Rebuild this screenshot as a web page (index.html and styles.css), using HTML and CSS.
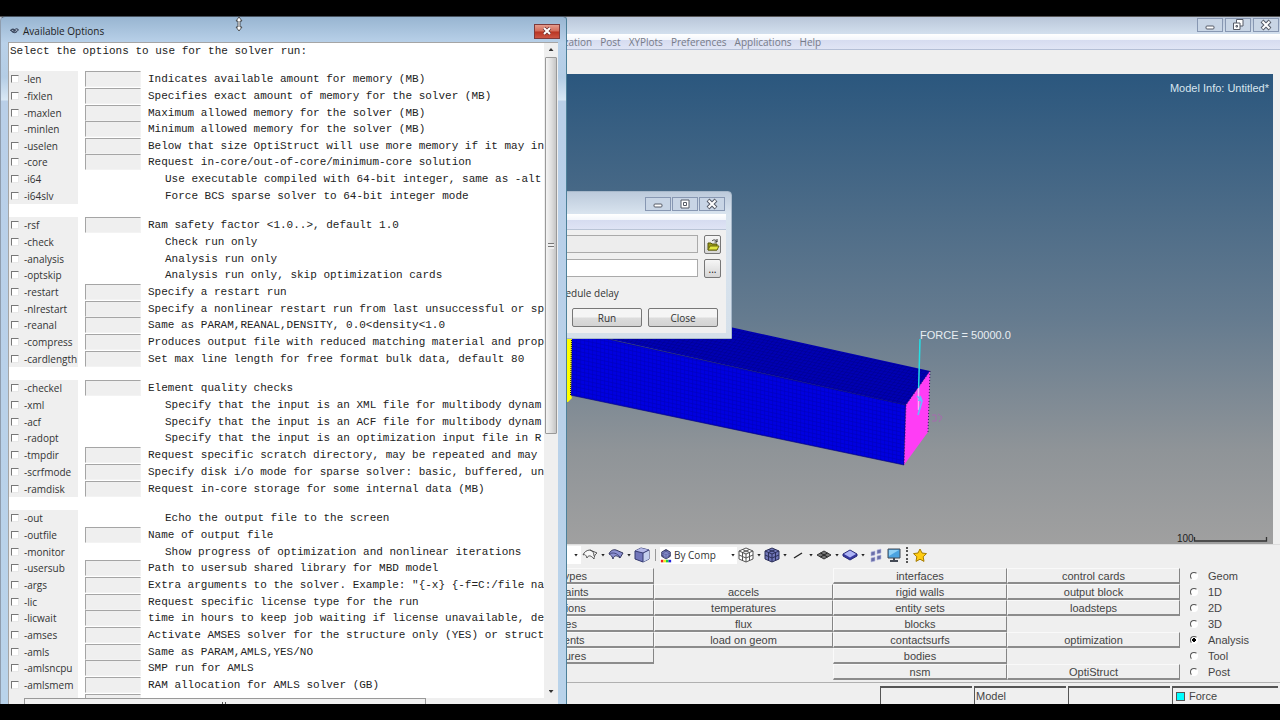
FILE: index.html
```html
<!DOCTYPE html>
<html lang="en">
<head>
<meta charset="utf-8">
<title>Available Options</title>
<link rel="stylesheet" href="styles.css">
</head>
<body>
<div class="screen">
<main class="app">
  <header class="app-title">
    <button class="win-btn" aria-label="Minimize"><svg viewBox="0 0 12 12"><rect x="2" y="7" width="8" height="3" rx="1" fill="#fff" stroke="#555a66"/></svg></button>
    <button class="win-btn" aria-label="Restore"><svg viewBox="0 0 12 12"><path d="M4.500.500h6.500v6.500h-6.500z" fill="#fff" stroke="#555a66"/><path d="M1.500 4h6.500v6.500h-6.500z" fill="#fff" stroke="#555a66"/><path d="M4 6.500h1.500v1.500H4z" fill="#fff" stroke="#555a66"/></svg></button>
    <button class="win-btn" aria-label="Close"><svg viewBox="0 0 12 12"><path d="M2 2l8 8M10 2l-8 8" stroke="#555a66" stroke-width="4"/><path d="M2.500 2.500l7 7M9.500 2.500l-7 7" stroke="#fff" stroke-width="2"/></svg></button>
  </header>
  <nav class="menu">
    <a href="#">Optimization</a><a href="#">Post</a><a href="#">XYPlots</a><a href="#">Preferences</a><a href="#">Applications</a><a href="#">Help</a>
  </nav>
  <section class="viewport">
    <svg class="scene" viewBox="0 74 1273 470" preserveAspectRatio="xMidYMid slice">
      <defs>
        <pattern id="front" width="4" height="4" patternUnits="userSpaceOnUse" patternTransform="skewY(12)"><rect width="4" height="4" fill="#0000e0"/><path d="M0 .500h4M.500 0v4" stroke="#0000bc" stroke-width=".6"/></pattern>
        <pattern id="top" width="4" height="3" patternUnits="userSpaceOnUse" patternTransform="skewY(12) skewX(-35)"><rect width="4" height="3" fill="#0000b4"/><path d="M0 .500h4M.500 0v3" stroke="#000090" stroke-width=".6"/></pattern>
      </defs>
      <path d="M560 300L730 327 930 371 906 405 560 328z" fill="url(#top)"/>
      <path d="M571 330L620 342 906 405 904 465 570 395z" fill="url(#front)" stroke="#000070" stroke-width=".6"/>
      <path d="M560 335h12l-1 60 1 3-4 4h-8z" fill="#ff0"/>
      <path d="M571.500 338l-1 58" stroke="#111" stroke-dasharray="1 1"/>
      <path d="M930 371L906 405 904 465 928 432z" fill="#ff3df5"/>
      <path d="M930 371L906 405 904 465M930 371L928 432" fill="none" stroke="#301060" stroke-dasharray="1 2"/>
      <path d="M920 339l-1.500 54" stroke="#22dfe6" stroke-width="1.500"/>
      <path d="M918.500 388v22" stroke="#ffb0fa" stroke-width="1.500"/>
      <path d="M918 400l4 1-4 14M917 396l5 5M920 396l2 5" fill="none" stroke="#6ab8ff" stroke-width="1.600"/>
      <path d="M932 415h4v6h-4M938 414l4 3-3 5" fill="none" stroke="#a66aae"/>
      <text x="920" y="339" class="force">FORCE = 50000.0</text>
      <text x="1177" y="542" class="scale">100</text>
      <path d="M1194.500 537v4h72v-4" fill="none" stroke="#333" stroke-width="1.300"/>
    </svg>
    <p class="model-info">Model Info: Untitled*</p>
  </section>
  <div class="tools">
    <button class="tool combo-end" aria-label="Display mode"><i class="caret"></i></button>
    <button class="tool" aria-label="Wireframe surface"><svg viewBox="0 0 18 18"><path d="M2 9C3 6 6 4 9 4L16 7C14 8 13 11 13 13 10 9 7 9 6 12 5 9 4 8 2 9zM9 4c3 1 4 3 4 6" fill="#f8f8f8" stroke="#555"/></svg></button><i class="caret"></i>
    <button class="tool" aria-label="Shaded surface"><svg viewBox="0 0 18 18"><path d="M2 8C3 5 6 3 9 4L16 7 13 12C10 9 7 9 6 13 5 10 4 9 2 8z" fill="#8d91d2" stroke="#34375e"/><path d="M2 8c4-2 8-1 11 3" stroke="#454980" fill="none"/></svg></button><i class="caret"></i>
    <button class="tool" aria-label="Solid"><svg viewBox="0 0 18 18"><path d="M2 5l6-3 8 2v9l-6 3-8-3z" fill="#7277bb" stroke="#343a70"/><path d="M2 5l6-3 8 2-6 3z" fill="#b5b9e8"/><path d="M10 7l6-3v9l-6 3z" fill="#c5d0ee"/><path d="M2 5l8 2v9M10 7l6-3" stroke="#343a70" fill="none"/></svg></button>
    <i class="rule"></i>
    <div class="combo">
      <svg viewBox="0 0 14 16"><path d="M2 4l5-3 5 3v5l-5 3-5-3z" fill="#555999" stroke="#25284e"/><path d="M2 6l5 3 5-3M7 6v6M2 4l5 2 5-2M4 3l5 3v5M10 3L5 6v5" stroke="#9ba2e0" stroke-width=".6" fill="none"/><path d="M1 13h3v3H1z" fill="#e22"/><path d="M4 13h3v3H4z" fill="#ee2"/><path d="M7 13h3v3H7z" fill="#2c4"/><path d="M10 13h3v3h-3z" fill="#22d"/></svg>
      <select aria-label="Color mode"><option>By Comp</option></select><i class="caret"></i>
    </div>
    <button class="tool" aria-label="Mesh wireframe"><svg viewBox="0 0 18 18"><path d="M2 5l7-3 7 3v8l-7 3-7-3zM2 5l7 3 7-3M9 8v8M2 9l7 3 7-3M5.500 3.500l7 3v8M12.500 3.500l-7 3v8" fill="#fff" stroke="#555"/></svg></button><i class="caret"></i>
    <button class="tool" aria-label="Mesh shaded"><svg viewBox="0 0 18 18"><path d="M2 5l7-3 7 3v8l-7 3-7-3z" fill="#7076b8"/><path d="M2 5l7-3 7 3v8l-7 3-7-3zM2 5l7 3 7-3M9 8v8M2 9l7 3 7-3M5.500 3.500l7 3v8M12.500 3.500l-7 3v8" fill="none" stroke="#2b2f58"/></svg></button><i class="caret"></i>
    <button class="tool" aria-label="Line elements"><svg viewBox="0 0 18 18"><path d="M5 12l8-5" stroke="#222" stroke-width="1.400"/></svg></button><i class="caret"></i>
    <button class="tool" aria-label="Shell elements"><svg viewBox="0 0 18 18"><path d="M2 9l7-4 7 4-7 4z" fill="#777" stroke="#333"/><path d="M5.500 7l7 4M12.500 7l-7 4" stroke="#222"/></svg></button><i class="caret"></i>
    <button class="tool" aria-label="Thick shells"><svg viewBox="0 0 18 18"><path d="M2 8l7-4 7 4v2l-7 4-7-4z" fill="#3638a0" stroke="#282a78"/><path d="M3 8l6-3.500L15 8l-6 3.500z" fill="#aeb4f5"/></svg></button><i class="caret"></i>
    <button class="tool" aria-label="Shrink elements"><svg viewBox="0 0 18 18"><path d="M4 6l4-1v4l-4 1zM10 4l4-1v4l-4 1zM4 12l4-1v4l-4 1zM10 10l4-1v4l-4 1z" fill="#6a6ea8" stroke="#b9bce0" stroke-width=".6"/></svg></button>
    <button class="tool" aria-label="Screen"><svg viewBox="0 0 18 18"><path d="M3 3h12v9H3z" fill="#4ba3e0" stroke="#444a55"/><path d="M4 4h10L4 10z" fill="#8fd0f5"/><path d="M8 12h2v2h3v2H5v-2h3z" fill="#444a55"/></svg></button>
    <i class="dots"></i>
    <button class="tool" aria-label="Favorites"><svg viewBox="0 0 18 18"><path d="M9 3l2 4 4.500.600-3.300 3.200.800 4.600L9 13.200l-4 2.200.800-4.600L2.500 7.600 7 7z" fill="#fc1" stroke="#a67c00"/></svg></button>
  </div>
  <section class="panel">
    <div class="col"><button>load types</button><button>constraints</button><button>equations</button><button>forces</button><button>moments</button><button>pressures</button></div>
    <div class="col"><span></span><button>accels</button><button>temperatures</button><button>flux</button><button>load on geom</button></div>
    <div class="col"><button>interfaces</button><button>rigid walls</button><button>entity sets</button><button>blocks</button><button>contactsurfs</button><button>bodies</button><button>nsm</button></div>
    <div class="col"><button>control cards</button><button>output block</button><button>loadsteps</button><span></span><button>optimization</button><span></span><button>OptiStruct</button></div>
    <div class="col pages">
      <label><input type="radio" name="page">Geom</label><label><input type="radio" name="page">1D</label><label><input type="radio" name="page">2D</label><label><input type="radio" name="page">3D</label><label><input type="radio" name="page" checked>Analysis</label><label><input type="radio" name="page">Tool</label><label><input type="radio" name="page">Post</label>
    </div>
  </section>
  <footer class="status"><span></span><span>Model</span><span></span><span><i class="swatch"></i>Force</span></footer>
</main>

<section class="run-dialog">
  <header>
    <button class="win-btn" aria-label="Minimize"><svg viewBox="0 0 12 12"><rect x="2" y="6" width="8" height="3" rx="1" fill="#fff" stroke="#555a66"/></svg></button>
    <button class="win-btn" aria-label="Maximize"><svg viewBox="0 0 12 12"><path d="M2 2h8v8H2zM4.500 4.500h3v3h-3z" fill="#fff" stroke="#555a66"/></svg></button>
    <button class="win-btn" aria-label="Close"><svg viewBox="0 0 12 12"><path d="M2 2l8 8M10 2l-8 8" stroke="#555a66" stroke-width="4"/><path d="M2.500 2.500l7 7M9.500 2.500l-7 7" stroke="#fff" stroke-width="2"/></svg></button>
  </header>
  <div class="run-body">
    <div class="run-strip"></div>
    <div class="field"><input type="text" class="grey" aria-label="Input file"><button aria-label="Open"><svg viewBox="0 0 14 14"><path d="M2 5h3l1 1h5v6H2z" fill="#9a9a18" stroke="#54540c"/><path d="M2 12l2-4h9l-2 4z" fill="#e2e640" stroke="#6a6a10"/><path d="M6 3c2-2 4-1 5 1M11 1v3H8.500" stroke="#333" fill="none"/></svg></button></div>
    <div class="field"><input type="text" aria-label="Options"><button>...</button></div>
    <p>Schedule delay</p>
    <div class="actions"><button>Run</button><button>Close</button></div>
  </div>
</section>

<section class="options">
  <header>
    <svg class="logo" viewBox="0 0 12 8"><path d="M1 4c1-3 4-3 5-2 2-2 4-1 5 1-1 1-2 1-3 3-2 1-3 0-4 0-1-2-2-1-3-2z" fill="#39465d"/><path d="M3 3l2 1M6 5l3-2M7 2l2 1" stroke="#c9d8ec" stroke-width=".8"/></svg>
    <h1>Available Options</h1>
    <button class="close" aria-label="Close"><svg viewBox="0 0 10 10"><path d="M2 2l6 6M8 2L2 8" stroke="#6b3030" stroke-width="3.500"/><path d="M2 2l6 6M8 2L2 8" stroke="#fff" stroke-width="2"/></svg></button>
  </header>
  <div class="options-body">
    <div class="list">
      <p class="lead">Select the options to use for the solver run:</p>
      <div class="group g8">
        <div class="opt"><label><input type="checkbox">-len</label><input type="text" aria-label="len"><span>Indicates available amount for memory (MB)</span></div>
        <div class="opt"><label><input type="checkbox">-fixlen</label><input type="text" aria-label="fixlen"><span>Specifies exact amount of memory for the solver (MB)</span></div>
        <div class="opt"><label><input type="checkbox">-maxlen</label><input type="text" aria-label="maxlen"><span>Maximum allowed memory for the solver (MB)</span></div>
        <div class="opt"><label><input type="checkbox">-minlen</label><input type="text" aria-label="minlen"><span>Minimum allowed memory for the solver (MB)</span></div>
        <div class="opt"><label><input type="checkbox">-uselen</label><input type="text" aria-label="uselen"><span>Below that size OptiStruct will use more memory if it may in</span></div>
        <div class="opt"><label><input type="checkbox">-core</label><input type="text" aria-label="core"><span>Request in-core/out-of-core/minimum-core solution</span></div>
        <div class="opt flag"><label><input type="checkbox">-i64</label><span>Use executable compiled with 64-bit integer, same as -alt</span></div>
        <div class="opt flag"><label><input type="checkbox">-i64slv</label><span>Force BCS sparse solver to 64-bit integer mode</span></div>
      </div>
      <div class="group g9">
        <div class="opt"><label><input type="checkbox">-rsf</label><input type="text" aria-label="rsf"><span>Ram safety factor &lt;1.0..&gt;, default 1.0</span></div>
        <div class="opt flag"><label><input type="checkbox">-check</label><span>Check run only</span></div>
        <div class="opt flag"><label><input type="checkbox">-analysis</label><span>Analysis run only</span></div>
        <div class="opt flag"><label><input type="checkbox">-optskip</label><span>Analysis run only, skip optimization cards</span></div>
        <div class="opt"><label><input type="checkbox">-restart</label><input type="text" aria-label="restart"><span>Specify a restart run</span></div>
        <div class="opt"><label><input type="checkbox">-nlrestart</label><input type="text" aria-label="nlrestart"><span>Specify a nonlinear restart run from last unsuccessful or sp</span></div>
        <div class="opt"><label><input type="checkbox">-reanal</label><input type="text" aria-label="reanal"><span>Same as PARAM,REANAL,DENSITY, 0.0&lt;density&lt;1.0</span></div>
        <div class="opt"><label><input type="checkbox">-compress</label><input type="text" aria-label="compress"><span>Produces output file with reduced matching material and prop</span></div>
        <div class="opt"><label><input type="checkbox">-cardlength</label><input type="text" aria-label="cardlength"><span>Set max line length for free format bulk data, default 80</span></div>
      </div>
      <div class="group g7">
        <div class="opt"><label><input type="checkbox">-checkel</label><input type="text" aria-label="checkel"><span>Element quality checks</span></div>
        <div class="opt flag"><label><input type="checkbox">-xml</label><span>Specify that the input is an XML file for multibody dynam</span></div>
        <div class="opt flag"><label><input type="checkbox">-acf</label><span>Specify that the input is an ACF file for multibody dynam</span></div>
        <div class="opt flag"><label><input type="checkbox">-radopt</label><span>Specify that the input is an optimization input file in R</span></div>
        <div class="opt"><label><input type="checkbox">-tmpdir</label><input type="text" aria-label="tmpdir"><span>Request specific scratch directory, may be repeated and may</span></div>
        <div class="opt"><label><input type="checkbox">-scrfmode</label><input type="text" aria-label="scrfmode"><span>Specify disk i/o mode for sparse solver: basic, buffered, un</span></div>
        <div class="opt"><label><input type="checkbox">-ramdisk</label><input type="text" aria-label="ramdisk"><span>Request in-core storage for some internal data (MB)</span></div>
      </div>
      <div class="group g12">
        <div class="opt flag"><label><input type="checkbox">-out</label><span>Echo the output file to the screen</span></div>
        <div class="opt"><label><input type="checkbox">-outfile</label><input type="text" aria-label="outfile"><span>Name of output file</span></div>
        <div class="opt flag"><label><input type="checkbox">-monitor</label><span>Show progress of optimization and nonlinear iterations</span></div>
        <div class="opt"><label><input type="checkbox">-usersub</label><input type="text" aria-label="usersub"><span>Path to usersub shared library for MBD model</span></div>
        <div class="opt"><label><input type="checkbox">-args</label><input type="text" aria-label="args"><span>Extra arguments to the solver. Example: "{-x} {-f=C:/file na</span></div>
        <div class="opt"><label><input type="checkbox">-lic</label><input type="text" aria-label="lic"><span>Request specific license type for the run</span></div>
        <div class="opt"><label><input type="checkbox">-licwait</label><input type="text" aria-label="licwait"><span>time in hours to keep job waiting if license unavailable, de</span></div>
        <div class="opt"><label><input type="checkbox">-amses</label><input type="text" aria-label="amses"><span>Activate AMSES solver for the structure only (YES) or struct</span></div>
        <div class="opt"><label><input type="checkbox">-amls</label><input type="text" aria-label="amls"><span>Same as PARAM,AMLS,YES/NO</span></div>
        <div class="opt"><label><input type="checkbox">-amlsncpu</label><input type="text" aria-label="amlsncpu"><span>SMP run for AMLS</span></div>
        <div class="opt"><label><input type="checkbox">-amlsmem</label><input type="text" aria-label="amlsmem"><span>RAM allocation for AMLS solver (GB)</span></div>
        <div class="opt"><label><input type="checkbox" aria-label="More"></label><input type="text" aria-label="More value"></div>
      </div>
    </div>
    <div class="vbar"><i class="up"></i><i class="thumb"></i><i class="space"></i><i class="down"></i></div>
    <div class="hbar"><i class="hthumb"></i></div>
  </div>
</section>
<svg class="cursor" viewBox="0 0 8 16"><path d="M4 1l3 4H5v6h2l-3 4-3-4h2V5H1z" fill="#fff" stroke="#333" stroke-width=".8"/></svg>
</div>
</body>
</html>
```
FILE: styles.css
```css
* { box-sizing: border-box; }
body { margin: 0; background: #000; font: 10px "Open Sans", "Noto Sans", sans-serif; color: #333; }
button, input, select { font: inherit; color: inherit; margin: 0; padding: 0; border-radius: 0; }
p, h1 { margin: 0; font-size: inherit; font-weight: 400; }
svg { display: block; }

.screen { position: relative; display: flex; height: 100vh; padding: 16px 0; overflow: hidden; }
.app { flex: 1; display: flex; flex-direction: column; min-width: 0; background: #efefef; overflow: hidden; }

.app-title { display: flex; justify-content: flex-end; gap: 2px; height: 18px; padding: 1px 1px 2px; border-top: 1px solid #555; background: linear-gradient(#b9c6d9, #d3e0ee); }
.win-btn { display: grid; place-items: center; width: 26px; height: 14px; border: 1px solid #8797b2; background: #c8d5e5; }
.win-btn svg { width: 12px; height: 12px; }
.menu { display: flex; align-items: center; gap: 8px; height: 16px; padding-left: 532px; border-bottom: 1px solid #b4bfd6; background: linear-gradient(#fff 0, #f3f6fc 6px, #d6dcf0 6px, #e0e5f5 100%); }
.menu a { color: #777b88; text-decoration: none; }

.viewport { position: relative; flex: 1; min-height: 0; margin: 24px 7px 0 0; background: linear-gradient(#2b577e, #657b8f 52%, #8f9498 80%, #a0a0a0); }
.scene { width: 100%; height: 100%; }
.force { font: 11px "Liberation Sans", Arial, sans-serif; fill: #e8eef2; }
.scale { font: 10px "Liberation Sans", Arial, sans-serif; fill: #222; }
.model-info { position: absolute; top: 8px; right: 4px; font: 11px/13px "Liberation Sans", Arial, sans-serif; color: #d8e6ef; }

.tools { display: flex; align-items: center; height: 24px; padding: 0 0 3px 567px; border-top: 1px solid #ddd; }
.tool { display: grid; place-items: center; flex: none; width: 18px; height: 18px; border: 0; background: none; }
.tool svg { width: 18px; height: 18px; }
.combo-end { width: 14px; background: #fff; padding-left: 4px; }
.caret { flex: none; width: 4px; height: 3px; margin: 0 2px; background: #222; clip-path: polygon(0 0, 100% 0, 50% 100%); }
.rule { width: 1px; height: 12px; margin: 0 4px; background: #999; }
.combo { display: flex; align-items: center; width: 77px; height: 17px; background: #fff; }
.combo svg { width: 12px; height: 15px; flex: none; }
.combo select { flex: 1; min-width: 0; appearance: none; border: 0; padding-left: 2px; background: none; }
.dots { height: 16px; margin: 0 3px; border-left: 2px dotted #555; }

.panel { display: grid; grid-template-columns: 184fr 179fr 174fr 173fr 100px; height: 115px; padding-left: 470px; border-bottom: 1px solid #b0b0b0; font: 11px "Liberation Sans", Arial, sans-serif; color: #444; }
.col { display: grid; grid-template-rows: repeat(7, 16px); }
.col button { border: solid; border-width: 1px 1px 2px 1px; border-color: #f9f9f9 #858585 #8c8c8c #fafafa; background: #efefef; line-height: 12px; }
.pages { padding-left: 10px; }
.pages label { display: flex; align-items: center; gap: 10px; }
.pages input { appearance: none; width: 8px; height: 8px; border: 1px solid; border-color: #555 #fff #fff #555; border-radius: 50%; background: #fff; }
.pages input:checked { background: radial-gradient(#000 0 2px, #fff 2px); }
.status { display: grid; grid-template-columns: 94px 94px 104px 108px; justify-content: end; height: 21px; padding-top: 3px; font: 11px "Liberation Sans", Arial, sans-serif; color: #444; }
.status span { display: flex; align-items: center; gap: 4px; margin-right: 2px; padding-left: 1px; border-top: 2px solid #555; border-left: 1px solid #555; }
.status span:last-child { padding-left: 3px; }
.swatch { width: 9px; height: 9px; border: 1px solid #555; background: #0ff; }

.run-dialog { position: absolute; left: 430px; top: 191px; width: 302px; padding: 0 5px 5px; border: 1px solid #a7b8ca; border-radius: 4px 4px 0 0; background: linear-gradient(#bccadb, #d9e4ef 22px, #d5e0ea); }
.run-dialog header { display: flex; justify-content: flex-end; gap: 1px; height: 22px; padding: 5px 1px 0; }
.run-body { display: flex; flex-direction: column; background: #f0f0f0; }
.run-strip { height: 16px; margin-bottom: 5px; border-bottom: 1px solid #b9c4d6; background: linear-gradient(#fff 0, #f3f6fc 6px, #d6dcf0 6px, #dfe4f5); }
.field { display: flex; gap: 6px; height: 19px; margin-bottom: 5px; padding-right: 5px; }
.field input { flex: 1; min-width: 0; height: 18px; border: 1px solid #aaa; background: #fff; }
.field .grey { background: #ededed; }
.field button { display: grid; place-items: center; width: 17px; border: 1px solid #777; border-radius: 2px; background: linear-gradient(#f6f6f6, #d6d6d6); color: #111; }
.field svg { width: 14px; height: 14px; }
.run-body p { padding: 3px 0 8px 113px; line-height: 14px; }
.actions { display: flex; justify-content: flex-end; gap: 6px; padding: 0 8px 6px; }
.actions button { width: 70px; height: 19px; border: 1px solid #777; border-radius: 2px; background: linear-gradient(#f5f5f5 45%, #dcdcdc 55%, #d3d3d3); }

.options { position: absolute; left: 0; top: 16px; bottom: 16px; width: 567px; display: flex; flex-direction: column; padding: 0 8px; overflow: hidden; border: solid; border-width: 1px 1px 0; border-color: #47525e #4d8099 #47525e #8f9dae; border-radius: 5px 4px 0 0; background: linear-gradient(#98b5d1, #b9d1e9 26px, #b4cde5 60px, #d9e8f5 83px, #b9cfe8 84px, #b9d3ea); }
.options header { display: flex; align-items: center; flex: none; height: 25px; padding-top: 3px; }
.options h1 { flex: 1; color: #222; }
.logo { width: 11px; height: 8px; margin-right: 3px; }
.close { display: grid; place-items: center; width: 26px; height: 15px; margin-right: -2px; border: 1px solid #7e3a3a; background: linear-gradient(#e59c8c, #d26a58 48%, #b83422 52%, #cc5544); }
.close svg { width: 10px; height: 10px; }
.options-body { flex: 1; min-height: 0; display: grid; grid-template: minmax(0, 1fr) 6px / minmax(0, 1fr) 14px; margin: 0 0 0 -1px; border-top: 1px solid #a5a5a5; border-left: 1px solid #a5a5a5; background: #fff; }
.list { overflow: hidden; }
.lead { height: 28px; padding-left: 1px; font: 11px/17px "Liberation Mono", "Courier New", monospace; color: #222; }
.group { display: grid; grid-auto-rows: 1fr; margin-bottom: 13px; background: linear-gradient(#efefef, #efefef) 0 0 / 69px 100% no-repeat; }
.g7 { height: 117px; }
.g8 { height: 133px; }
.g9 { height: 150px; }
.g12 { height: 200px; }
.opt { display: grid; grid-template-columns: 69px 56px 1fr; align-items: center; column-gap: 7px; min-height: 0; }
.opt label { display: flex; align-items: center; gap: 5px; line-height: 16px; }
.opt span { white-space: nowrap; font: 11px/16px "Liberation Mono", "Courier New", monospace; color: #222; }
.flag span { grid-column: 3; padding-left: 17px; }
.opt input[type="checkbox"] { appearance: none; width: 8px; height: 8px; margin-left: 2px; border: 1px solid; border-color: #777 #e8e8e8 #e8e8e8 #777; background: #fff; }
.opt input[type="text"] { width: 56px; height: 16px; border: 1px solid; border-color: #a5a5a5 #f3f3f3 #f3f3f3 #a5a5a5; background: #efefef; }

.vbar { display: flex; flex-direction: column; align-items: center; padding: 5px 1px; background: #efefef; }
.up { width: 5px; height: 3px; margin-bottom: 6px; background: #333; clip-path: polygon(50% 0, 100% 100%, 0 100%); }
.down { width: 5px; height: 3px; background: #333; clip-path: polygon(0 0, 100% 0, 50% 100%); }
.thumb { align-self: stretch; flex: 376; border: 1px solid #999; border-radius: 1px; background: repeating-linear-gradient(#777 0 1px, #eee 1px 3px) center / 6px 6px no-repeat, linear-gradient(90deg, #f4f4f4, #dedede 55%, #c5c5c5); }
.space { flex: 256; }
.hbar { grid-column: 1 / -1; padding-left: 15px; background: #efefef; }
.hthumb { display: block; width: 402px; height: 6px; border: 1px solid #999; border-bottom: 0; background: repeating-linear-gradient(90deg, #555 0 1px, #eee 1px 3px) center bottom / 6px 2px no-repeat, #f0f0f0; }
.cursor { position: absolute; left: 235px; top: 16px; width: 8px; height: 16px; }
```
